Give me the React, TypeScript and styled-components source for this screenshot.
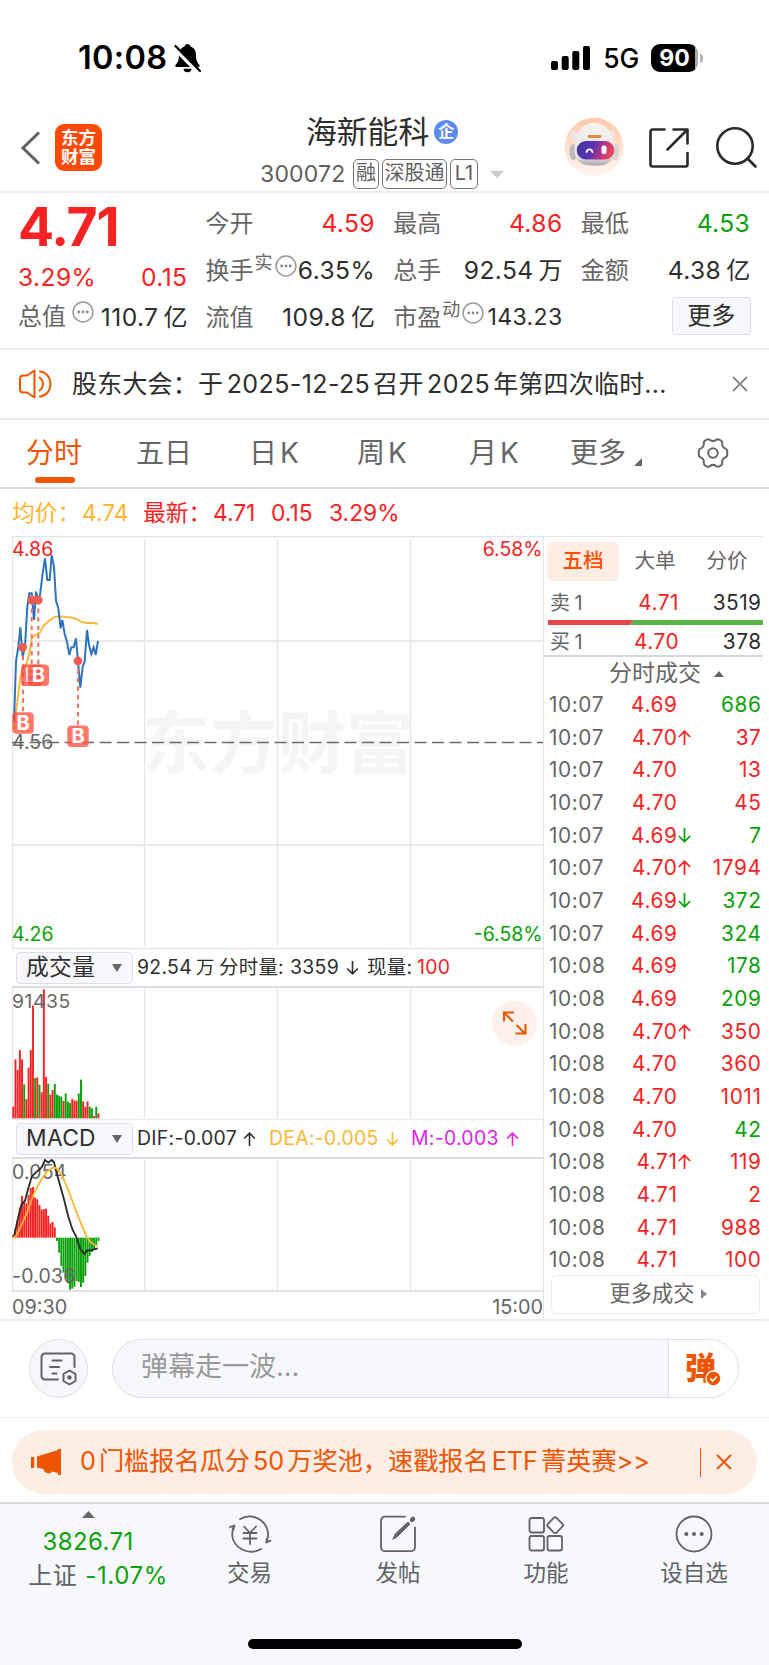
import React from 'react';
import styled, { createGlobalStyle } from 'styled-components';

const RED = '#f82222';
const GREEN = '#0aa10a';
const ORANGE = '#ee5500';
const INK = '#2e2e2e';
const GREY = '#666666';
const LINE = '#e2e5ea';

const Global = createGlobalStyle`
  * { box-sizing: border-box; }
  body {
    margin: 0;
    background: #fff;
    font-family: Inter, "Noto Sans CJK SC", sans-serif;
    line-height: 1;
    color: ${INK};
  }
  svg { display: block; flex: none; overflow: visible; }
  button { font: inherit; color: inherit; padding: 0; }
`;

const Screen = styled.div`
  width: 769px;
  height: 1665px;
  display: flex;
  flex-direction: column;
  overflow: hidden;
  white-space: nowrap;
`;

/* ---------- status bar ---------- */

const StatusBar = styled.div`
  height: 104px;
  padding: 12px 66px 0 78px;
  display: flex;
  align-items: center;
  color: #000;
`;
const Clock = styled.div`
  width: 96px;
  font-size: 32.5px;
  font-weight: 600;
  letter-spacing: 0.3px;
`;
const Network = styled.div`
  margin: 0 12px 0 13px;
  font-size: 26.5px;
  font-weight: 500;
  letter-spacing: -0.2px;
`;
const Battery = styled.div`
  width: 47px;
  height: 28px;
  border-radius: 9px;
  background: linear-gradient(90deg, #000 93%, #aaa 93%);
  color: #fff;
  font-size: 23px;
  font-weight: 700;
  text-align: center;
  line-height: 28px;
`;
const BatteryCap = styled.div`
  width: 3px;
  height: 9px;
  margin-left: 2px;
  border-radius: 0 4px 4px 0;
  background: #b5b5b5;
`;
const Spacer = styled.div`flex: 1;`;

/* ---------- title bar ---------- */

const TitleBar = styled.header`
  height: 89px;
  padding: 0 12px 0 20px;
  display: grid;
  grid-template-columns: 35px 47px 1fr 85px 67px 41px;
  border-bottom: 2px solid #ececec;
`;
const IconCell = styled.div<{ $top: number; $left?: number }>`
  padding: ${p => p.$top}px 0 0 ${p => p.$left ?? 0}px;
`;
const Logo = styled.div`
  width: 47px;
  height: 47px;
  margin-top: 20px;
  border-radius: 9px;
  background: #ff4a07;
  color: #fff;
  font-size: 17.5px;
  font-weight: 700;
  line-height: 19px;
  padding-top: 4px;
  text-align: center;
`;
const TitleBlock = styled.div`
  padding-left: 158px;
`;
const StockName = styled.div`
  height: 55px;
  padding: 1px 0 0 46px;
  display: flex;
  align-items: center;
  font-size: 30.8px;
`;
const CompanyBadge = styled.span`
  width: 24px;
  height: 24px;
  margin-left: 5px;
  border-radius: 50%;
  background: #5c8bee;
  color: #fff;
  font-size: 16px;
  font-weight: 700;
  line-height: 23px;
  text-align: center;
`;
const CodeRow = styled.div`
  display: flex;
  align-items: center;
  color: #606060;
`;
const Code = styled.span`
  width: 93px;
  font-size: 23px;
  letter-spacing: 0.2px;
`;
const Tag = styled.span<{ $w: number }>`
  width: ${p => p.$w}px;
  height: 30px;
  margin-right: 3px;
  border: 1.5px solid #777;
  border-radius: 5px;
  font-size: 20px;
  line-height: 26px;
  text-align: center;
`;

/* ---------- quote summary ---------- */

const Quote = styled.section`
  height: 157px;
  padding: 7px 0 0 18px;
  display: grid;
  grid-template-columns: repeat(4, 169px);
  column-gap: 18.6px;
  border-bottom: 2px solid #ececec;
`;
const QuoteColumn = styled.div``;
const BigPrice = styled.div`
  height: 54px;
  font-size: 53.5px;
  font-weight: 700;
  line-height: 54px;
  letter-spacing: -1.2px;
  color: ${RED};
`;
const QuoteRow = styled.div<{ $h?: number }>`
  height: ${p => p.$h ?? 47}px;
  display: flex;
  align-items: center;
  justify-content: space-between;
`;
const QuoteLabel = styled.span`
  display: flex;
  align-items: center;
  font-size: 24px;
  color: ${GREY};
`;
const SmallMark = styled.sup`
  font-size: 18px;
  line-height: 18px;
  margin: -16px 0 0 1px;
`;
const InfoDot = styled.span<{ $gap?: number }>`
  margin: -10px 0 0 ${p => p.$gap ?? 2}px;
`;
const QuoteValue = styled.span<{ $c?: string; $s?: number }>`
  font-size: ${p => p.$s ?? 24.6}px;
  letter-spacing: 0.4px;
  margin-right: -0.4px;
  color: ${p => p.$c ?? INK};
`;
const Unit = styled.span`
  margin-left: 5px;
  font-size: 24px;
  letter-spacing: 0;
`;
const MoreButton = styled.button`
  width: 79px;
  height: 38px;
  margin: 3px -1px 0 auto;
  display: block;
  border: 1.5px solid #dcdfe6;
  border-radius: 4px;
  background: #f7f8fb;
  font-size: 24px;
`;

/* ---------- notice ---------- */

const Notice = styled.div`
  height: 70px;
  padding: 0 21px 0 18px;
  display: flex;
  align-items: center;
  border-bottom: 2px solid #e9e9ec;
`;
const NoticeText = styled.div`
  margin-left: 18px;
  flex: 1;
  font-size: 25px;
  letter-spacing: 0.2px;
`;
const Digits = styled.span`
  margin: 0 3px 0 3.5px;
  letter-spacing: 0.4px;
`;

/* ---------- period tabs ---------- */

const Tabs = styled.nav`
  height: 69px;
  padding-left: 26px;
  display: grid;
  grid-template-columns: 110px 113px 108px 112px 101px 127px 40px;
  align-items: center;
  border-bottom: 2px solid #d9dce2;
`;
const Tab = styled.div<{ $on?: boolean }>`
  height: 67px;
  display: flex;
  flex-direction: column;
  align-items: flex-start;
  justify-content: flex-end;
  font-size: 28px;
  color: ${p => (p.$on ? ORANGE : GREY)};
`;
const TabLabel = styled.span<{ $gap?: number }>`
  height: 33px;
  line-height: 28px;
  display: flex;
  gap: ${p => p.$gap ?? 3}px;
`;
const Underline = styled.i<{ $on?: boolean }>`
  width: 40px;
  height: 6px;
  margin: 5px 0 4px 9px;
  border-radius: 3px;
  background: ${p => (p.$on ? ORANGE : 'transparent')};
`;

const PriceLine = styled.div`
  height: 47px;
  padding: 1px 0 0 12px;
  display: flex;
  align-items: center;
  font-size: 22.8px;
  color: ${RED};
`;
const PriceItem = styled.span<{ $w: number; $c?: string }>`
  width: ${p => p.$w}px;
  color: ${p => p.$c ?? RED};
`;

/* ---------- charts + order book ---------- */

const Market = styled.section`
  height: 785px;
  display: grid;
  grid-template-columns: 544px 225px;
  border-bottom: 2px solid #ececec;
`;
const ChartColumn = styled.div`
  border-right: 1.5px solid ${LINE};
`;
const IndicatorBar = styled.div`
  height: 39px;
  margin-left: 12px;
  padding-left: 4px;
  display: flex;
  align-items: center;
  font-size: 19.4px;
  letter-spacing: 0.3px;
  border-bottom: 2px solid #dadde3;
`;
const Select = styled.div`
  width: 117px;
  height: 32px;
  margin-right: 4px;
  padding: 0 10px 0 9px;
  display: flex;
  align-items: center;
  justify-content: space-between;
  border: 1.5px solid #dcdfe6;
  border-radius: 4px;
  background: #f7f8fb;
  font-size: 22.8px;
`;
const IndicatorText = styled.span<{ $w: number; $c?: string }>`
  width: ${p => p.$w}px;
  color: ${p => p.$c ?? INK};
`;
const SmallUnit = styled.span`
  margin-left: 4px;
  font-size: 18.5px;
`;
const TimeAxis = styled.div`
  height: 28px;
  margin-left: 12px;
  padding: 4px 0 0;
  display: flex;
  align-items: center;
  justify-content: space-between;
  font-size: 19.8px;
  color: ${GREY};
`;
const Book = styled.div`
  border-top: 1.5px solid ${LINE};
  margin-right: 6px;
`;
const BookTabs = styled.div`
  height: 45px;
  padding: 5px 0 0 3px;
  display: grid;
  grid-template-columns: 72px 72px 72px;
`;
const BookTab = styled.div<{ $on?: boolean }>`
  height: 39px;
  border-radius: 6px;
  background: ${p => (p.$on ? '#ffede5' : 'transparent')};
  color: ${p => (p.$on ? '#ff5000' : GREY)};
  font-size: 20.6px;
  font-weight: ${p => (p.$on ? 500 : 400)};
  line-height: 38px;
  text-align: center;
`;
const LevelRow = styled.div<{ $h: number }>`
  height: ${p => p.$h}px;
  padding: 4px 1.5px 0 6px;
  display: grid;
  grid-template-columns: 60px 69px 1fr;
  align-items: center;
  font-size: 20.8px;
  letter-spacing: 0.5px;
`;
const Level = styled.span`
  color: ${GREY};
  font-size: 20px;
  display: flex;
  gap: 4px;
`;
const Right = styled.span<{ $c?: string }>`
  text-align: right;
  color: ${p => p.$c ?? INK};
`;
const BookTitle = styled.div`
  height: 34px;
  padding: 1px 0 0 65px;
  display: flex;
  align-items: center;
  gap: 13px;
  border-top: 2px solid #d3d7de;
  color: ${GREY};
  font-size: 23px;
`;
const TradeRow = styled.div`
  height: 32.68px;
  padding: 0 1.5px 0 5px;
  display: grid;
  grid-template-columns: 60px 68.5px 13.5px 1fr;
  align-items: center;
  font-size: 20.8px;
  letter-spacing: 0.6px;
  color: ${GREY};
`;
const ArrowCell = styled.span`
  margin-top: -2px;
`;
const MoreTrades = styled.div`
  width: 209px;
  height: 39px;
  margin: -2px 0 0 7px;
  padding: 0 0 1px 6px;
  display: flex;
  align-items: center;
  justify-content: center;
  gap: 7px;
  border: 1.5px solid #ececee;
  border-radius: 6px;
  color: ${GREY};
  font-size: 21.2px;
`;

/* ---------- comment bar ---------- */

const CommentBar = styled.div`
  height: 97px;
  padding: 18px 30px 0 29px;
  display: flex;
  gap: 24px;
  border-bottom: 1.5px solid #f0f0f2;
`;
const RoundButton = styled.div`
  width: 59px;
  height: 59px;
  border: 1.5px solid #dcdfe5;
  border-radius: 50%;
  background: #f6f7fa;
  display: grid;
  place-items: center;
`;
const CommentField = styled.div`
  flex: 1;
  height: 59px;
  display: flex;
  border: 1.5px solid #dcdfe5;
  border-radius: 30px;
  overflow: hidden;
  background: #f6f7fa;
`;
const Placeholder = styled.div`
  flex: 1;
  padding: 13px 0 0 28px;
  color: #999;
  font-size: 27px;
`;
const SendCell = styled.div`
  width: 70px;
  border-left: 1.5px solid #dcdfe5;
  background: #fff;
  padding: 12px 0 0 16px;
  color: ${ORANGE};
  font-size: 31px;
  font-weight: 900;
  display: flex;
`;
const SendBadge = styled.span`
  margin: 19px 0 0 -10px;
`;

/* ---------- promo banner ---------- */

const BannerWrap = styled.div`
  height: 86px;
  padding: 12px 12px 0;
  border-bottom: 2px solid #d9dce0;
`;
const Banner = styled.div`
  height: 64px;
  padding: 0 25px 0 19px;
  border-radius: 32px;
  background: #feede5;
  color: ${ORANGE};
  display: flex;
  align-items: center;
`;
const BannerText = styled.div`
  flex: 1;
  padding-left: 18px;
  font-size: 25.2px;
`;
const BannerDigits = styled.span<{ $first?: boolean }>`
  margin: 0 3px 0 ${p => (p.$first ? 0 : 3)}px;
`;
const BannerRule = styled.i`
  width: 1.5px;
  height: 29px;
  margin-right: 15px;
  background: ${ORANGE};
`;

/* ---------- bottom navigation ---------- */

const Bottom = styled.footer`
  flex: 1;
  background: #f7f8fb;
  display: flex;
  flex-direction: column;
  align-items: center;
`;
const NavGrid = styled.div`
  width: 100%;
  height: 135px;
  padding-left: 12px;
  display: grid;
  grid-template-columns: 163px 149px 148px 148px 148px;
`;
const NavItem = styled.div`
  padding-top: 11px;
  display: flex;
  flex-direction: column;
  align-items: center;
  gap: 9px;
  font-size: 22.5px;
  color: #606266;
`;
const IndexItem = styled.div`
  width: 152px;
  padding-top: 7px;
  font-size: 24px;
  letter-spacing: 0.4px;
  color: ${GREEN};
  display: flex;
  flex-direction: column;
  align-items: center;
`;
const IndexValue = styled.div`
  margin-top: 12px;
`;
const IndexChange = styled.div`
  margin: 10px 0 0 20px;
  letter-spacing: 0.6px;
`;
const IndexName = styled.span`
  color: #606266;
  margin-right: 8px;
`;
const HomeIndicator = styled.div`
  width: 274px;
  height: 10px;
  border-radius: 5px;
  background: #000;
`;

/* ---------- icons ---------- */

const MutedBell = () => (
  <svg width="27" height="30" viewBox="0 0 27 30">
    <path d="M13.5 1c-1.7 0-2.8 1.1-2.9 2.5C7 4.700 5 7.800 5 11.500c0 6-1.200 8-3.300 10.200-.8.9-.4 2.300 1 2.300h21.600c1.400 0 1.800-1.400 1-2.300C23.200 19.500 22 17.500 22 11.500c0-3.700-2-6.800-5.600-8C16.300 2.100 15.200 1 13.500 1z" />
    <path d="M9.500 25.800h8a4 3.400 0 0 1-8 0z" />
    <path d="M0 4 24.500 29" stroke="#fff" strokeWidth="5" />
    <path d="M1.500 3 26 28" stroke="#000" strokeWidth="2.200" strokeLinecap="round" />
  </svg>
);
const Signal = () => (
  <svg width="39" height="24" viewBox="0 0 39 24">
    <rect x="0" y="15" width="7" height="9" rx="2" />
    <rect x="10.700" y="10" width="7" height="14" rx="2" />
    <rect x="21.300" y="5" width="7" height="19" rx="2" />
    <rect x="32" y="0" width="7" height="24" rx="2" />
  </svg>
);
const Back = () => (
  <svg width="21" height="34" viewBox="0 0 21 34" fill="none" stroke="#606060" strokeWidth="3">
    <path d="M19 1.500 3 17l16 15.500" />
  </svg>
);
const Robot = () => (
  <svg width="60" height="60" viewBox="0 0 60 60">
    <defs>
      <linearGradient id="halo" x1="0" y1="0" x2="0" y2="1">
        <stop offset="0" stopColor="#ffc8ac" />
        <stop offset="1" stopColor="#fff6f2" />
      </linearGradient>
      <linearGradient id="visor" x1="0" y1="0" x2="1" y2="0.200">
        <stop offset="0" stopColor="#3c3c98" />
        <stop offset="0.450" stopColor="#5a30b8" />
        <stop offset="0.750" stopColor="#b0368a" />
        <stop offset="1" stopColor="#e6485a" />
      </linearGradient>
      <linearGradient id="shell" x1="0" y1="0" x2="0" y2="1">
        <stop offset="0" stopColor="#f6f3f3" />
        <stop offset="0.800" stopColor="#e6e2e4" />
        <stop offset="1" stopColor="#a9a4ab" />
      </linearGradient>
    </defs>
    <circle cx="30" cy="30" r="29.300" fill="url(#halo)" />
    <path d="M7 12c-1.500 5 0 9 5 12l6-9c-5 1-9 0-11-3zM49 12c2.500 5 1 9-3 12l-6-9c4 1 7 0 9-3z" fill="#ece7e7" />
    <ellipse cx="9.500" cy="35" rx="4" ry="8" fill="#bdb8be" />
    <ellipse cx="51" cy="35" rx="4" ry="8" fill="#d6d2d6" />
    <path d="M30 6C18 6 11 16 10.500 31c-.3 9 3 14.500 9.500 16.500 6 1.600 15 1.600 21 0 6.500-2 9.800-7.500 9.500-16.500C50 16 42 6 30 6z" fill="url(#shell)" />
    <path d="M25 19.500h11" stroke="#e0893f" strokeWidth="2.800" strokeLinecap="round" />
    <rect x="12.800" y="24" width="37.500" height="18.500" rx="9" fill="url(#visor)" />
    <path d="M22.500 35c1-3.500 5-3.500 6 0" fill="none" stroke="#fff" strokeWidth="1.800" strokeLinecap="round" />
    <rect x="37.500" y="28.500" width="5" height="8.500" rx="2" fill="#fff" />
  </svg>
);
const Share = () => (
  <svg width="40" height="40" viewBox="0 0 40 40" fill="none" stroke="#2b2b2b" strokeWidth="2.600" strokeLinecap="round" strokeLinejoin="round">
    <path d="M15.500 1.500H3.500a2 2 0 0 0-2 2v33a2 2 0 0 0 2 2h33a2 2 0 0 0 2-2V25" />
    <path d="M24.500 1.500h14v14M38 2 18.500 21.500" />
  </svg>
);
const Search = () => (
  <svg width="42" height="42" viewBox="0 0 42 42" fill="none" stroke="#2b2b2b" strokeWidth="2.600" strokeLinecap="round">
    <circle cx="19" cy="19" r="17.700" />
    <path d="m31.500 31.500 8 8" />
  </svg>
);
const Dots = () => (
  <svg width="22" height="22" viewBox="0 0 22 22">
    <circle cx="11" cy="11" r="9.900" fill="none" stroke="#999" strokeWidth="1.500" />
    <circle cx="6.700" cy="11" r="1.400" fill="#888" />
    <circle cx="11" cy="11" r="1.400" fill="#888" />
    <circle cx="15.300" cy="11" r="1.400" fill="#888" />
  </svg>
);
const Speaker = () => (
  <svg width="36" height="30" viewBox="0 0 36 30" fill="none" stroke={ORANGE} strokeWidth="2" strokeLinejoin="round" strokeLinecap="round">
    <path d="M2 10c0-2 1-3.500 3-3.500h4L16.500 1.500v27L9 23.500H5c-2 0-3-1.500-3-3.500z" />
    <path d="M21.500 8.500c4.500 2.500 4.500 10.500 0 13M22 2.500c14 2 14 23 0 25" />
  </svg>
);
const Cross = ({ size, color, w }: { size: number; color: string; w: number }) => (
  <svg width={size} height={size} viewBox="0 0 16 16" stroke={color} strokeWidth={w}>
    <path d="m1 1 14 14M15 1 1 15" />
  </svg>
);
const Gear = () => (
  <svg width="32" height="32" viewBox="0 1 32 30" fill="none" stroke={GREY} strokeWidth="2" strokeLinejoin="round">
    <path d="M10 1.500c1.200-.6 2-.4 2.900.4 2 1.600 4.200 1.600 6.200 0 .9-.8 1.700-1 2.900-.4l2 1.200c1 .6 1.300 1.400 1.200 2.500-.3 2.600.8 4.400 3.200 5.400 1.200.5 1.800 1.100 1.800 2.300v4.200c0 1.200-.6 1.800-1.800 2.300-2.400 1-3.500 2.800-3.200 5.400.1 1.100-.2 1.900-1.200 2.500l-2 1.200c-1.200.6-2 .4-2.900-.4-2-1.600-4.200-1.600-6.200 0-.9.800-1.700 1-2.900.4l-2-1.200c-1-.6-1.300-1.400-1.200-2.500.3-2.600-.8-4.400-3.200-5.400C2.400 18.900 1.800 18.300 1.800 17.100v-4.200c0-1.200.6-1.800 1.800-2.300 2.400-1 3.500-2.800 3.200-5.400-.1-1.100.2-1.900 1.200-2.500z" />
    <circle cx="16" cy="15" r="4.800" />
  </svg>
);
const Tri = ({ d, w, h, c = GREY }: { d: string; w: number; h: number; c?: string }) => (
  <svg width={w} height={h} viewBox="0 0 10 10" preserveAspectRatio="none" fill={c}>
    <path d={d} />
  </svg>
);
const DOWN = 'M0 0h10L5 10z';
const UP = 'M0 10h10L5 0z';
const RIGHT = 'M0 0v10l10-5z';

/* ---------- chart data, three units per pixel ---------- */

const pricePts =
  '42,575 48,395 55,350 61,292 68,380 75,350 82,230 88,190 95,190 102,270 108,185 115,210 120,195 128,130 135,85 142,150 149,150 155,75 162,110 168,212 175,235 182,295 187,270 194,312 201,335 208,375 214,352 221,352 228,325 234,395 241,473 248,410 254,395 261,300 267,345 274,372 281,352 287,375 294,333';
const avgPts =
  '42,600 48,545 55,490 61,440 68,420 80,400 88,370 95,325 105,315 120,307 130,288 150,270 165,260 185,259 215,263 232,268 243,275 260,279 280,279 293,282';
const volumes =
  '530r 388r 420r 360r 388r 463g 508r 413r 360r 227r 444g 442r 464g 487r 178r 441r 461g 494r 480r 462g 494g 497g 500g 513r 490g 515g 519g 506r 512r 512r 491g 449g 514r 530r 514r 530g 535g 558r 530g 550r'.split(' ');
const macd = [
  915, 895, 870, 833, 798, 815, 820, 795, 774, 771, 803, 808, 825, 838, 838, 836, 857, 880, 876, 892, 933, 968,
  1008, 1028, 1045, 1060, 1079, 1076, 1070, 1053, 1056, 1071, 1058, 1038, 998, 978, 966, 956, 945, 933,
];
const difPts =
  '42,920 55,860 65,822 75,812 85,775 95,740 110,725 125,712 135,690 145,698 155,690 162,697 170,730 190,800 205,860 218,900 228,918 240,955 247,965 254,972 260,962 275,960 293,955';
const deaPts =
  '40,924 50,915 62,890 80,850 100,795 120,755 140,725 160,712 170,715 185,735 205,780 225,835 245,885 260,920 270,935 280,942 293,948';

const dots = [[22.7, 111.3], [31.700, 64], [38.300, 64], [78, 125]];
const badges = [[23, 187], [31.700, 139.300], [38.300, 139.300], [78, 200.300]];

const Grid = ({ top, bottom }: { top: number; bottom: number }) => (
  <path d={`M144.500 ${top}V${bottom}M277.500 ${top}V${bottom}M410.500 ${top}V${bottom}`} stroke={LINE} strokeWidth="1.300" />
);

const PriceChart = () => (
  <svg width="543" height="413" viewBox="0 0 543 413" fontSize="19.500">
    <text x="142" y="232" fontSize="68" fontWeight="700" fill="#f5f5f5">东方财富</text>
    <path d="M12.500 413V.7H543" fill="none" stroke={LINE} strokeWidth="1.300" />
    <Grid top={3} bottom={410} />
    <path d="M12 105H543M12 309H543" stroke="#e5e9f0" strokeWidth="1.800" />
    <path d="M12 412.500H543" stroke={LINE} strokeWidth="1.300" />
    <path d="M12 206.500H543" stroke="#6b6b6b" strokeWidth="1.400" strokeDasharray="12 5.500" />
    <text x="12" y="20" fill={RED}>4.86</text>
    <text x="542.500" y="20" fill={RED} textAnchor="end">6.58%</text>
    <text x="12" y="213" fill={GREY}>4.56</text>
    <text x="12" y="405" fill={GREEN}>4.26</text>
    <text x="542.500" y="405" fill={GREEN} textAnchor="end">-6.58%</text>
    <g transform="translate(0 -6) scale(.33333)" fill="none">
      <polyline points={avgPts} stroke="#fcb630" strokeWidth="5.500" />
      <polyline points={pricePts} stroke="#2e73bd" strokeWidth="6" />
    </g>
    {dots.map(([x, y], i) => (
      <g key={i}>
        <path d={`M${badges[i][0]} ${y}V${badges[i][1] - 10}`} stroke="#fb6f5f" strokeWidth="2" strokeDasharray="4.500 4" />
        <circle cx={x} cy={y} r="4.400" fill="#f25b50" />
      </g>
    ))}
    {badges.map(([x, y], i) => (
      <g key={i}>
        <rect x={x - 10.700} y={y - 10.700} width="21.400" height="21.400" rx="4" fill="#ff4a36" fillOpacity=".75" />
        <text x={x} y={y + 7} fill="#fff" fontSize="20" fontWeight="700" textAnchor="middle">B</text>
      </g>
    ))}
  </svg>
);

const VolumeChart = () => (
  <svg width="543" height="132" viewBox="0 0 543 132" fontSize="19.300">
    <path d="M12.500 0V131" stroke={LINE} strokeWidth="1.300" />
    <Grid top={1} bottom={130} />
    <path d="M12 131.500H543" stroke="#ececef" strokeWidth="1.600" />
    <g transform="translate(0 -58) scale(.33333)">
      {volumes.map((v, i) => {
        const y = parseInt(v, 10);
        return <rect key={i} x={37 + i * 6.550} y={y} width="5.800" height={565 - y} fill={v.endsWith('r') ? RED : GREEN} />;
      })}
    </g>
    <text x="12" y="20" fill={GREY} letterSpacing=".6">91435</text>
    <circle cx="514.500" cy="35" r="22.500" fill="#fef1eb" />
    <g fill="none" stroke={ORANGE} strokeWidth="2">
      <path d="M504 33.500v-9h10M504.500 25l8.500 8.500M525.500 36v9.500h-10M525 45.500l-8.500-8.500" />
    </g>
  </svg>
);

const MacdChart = () => (
  <svg width="543" height="133" viewBox="0 0 543 133" fontSize="19.500">
    <path d="M12.500 0V132" stroke={LINE} strokeWidth="1.300" />
    <Grid top={1} bottom={131} />
    <path d="M12 132H543" stroke="#d6d9df" strokeWidth="1.600" />
    <g transform="translate(0 -229) scale(.33333)">
      {macd.map((y, i) => (
        <rect key={i} x={37 + i * 6.550} y={Math.min(y, 923)} width="5.800" height={Math.abs(923 - y)} fill={i < 20 ? RED : GREEN} />
      ))}
    </g>
    <text x="12" y="20" fill={GREY} letterSpacing=".2">0.054</text>
    <text x="12" y="124" fill={GREY} letterSpacing=".2">-0.036</text>
    <g transform="translate(0 -229) scale(.33333)" fill="none" strokeWidth="5.500">
      <polyline points={difPts} stroke="#2b2b2b" />
      <polyline points={deaPts} stroke="#fcb630" />
    </g>
  </svg>
);

const trades: [string, string, string, string, boolean][] = [
  ['10:07', '4.69', '', '686', false],
  ['10:07', '4.70', '↑', '37', true],
  ['10:07', '4.70', '', '13', true],
  ['10:07', '4.70', '', '45', true],
  ['10:07', '4.69', '↓', '7', false],
  ['10:07', '4.70', '↑', '1794', true],
  ['10:07', '4.69', '↓', '372', false],
  ['10:07', '4.69', '', '324', false],
  ['10:08', '4.69', '', '178', false],
  ['10:08', '4.69', '', '209', false],
  ['10:08', '4.70', '↑', '350', true],
  ['10:08', '4.70', '', '360', true],
  ['10:08', '4.70', '', '1011', true],
  ['10:08', '4.70', '', '42', false],
  ['10:08', '4.71', '↑', '119', true],
  ['10:08', '4.71', '', '2', true],
  ['10:08', '4.71', '', '988', true],
  ['10:08', '4.71', '', '100', true],
];

const Arrow = ({ up, c, h = 14, w = 13 }: { up: boolean; c: string; h?: number; w?: number }) => (
  <svg width={w} height={h} viewBox="0 0 13 15" fill="none" stroke={c} strokeWidth="1.700" strokeLinejoin="miter">
    <path d={up ? 'M6.500 15V1.500M.8 7l5.700-5.700L12.200 7' : 'M6.500 0v13.500M.8 8l5.700 5.700L12.200 8'} />
  </svg>
);

const navStroke = { fill: 'none', stroke: '#606266', strokeWidth: 1.8, strokeLinecap: 'round', strokeLinejoin: 'round' } as const;

const TradeIcon = () => (
  <svg width="44" height="38" viewBox="0 0 44 38" {...navStroke}>
    <path d="M12 4C22-2 35 3 39 13.500c1.800 4.700 1.500 9.300-.8 14l4.300-1.800M38.200 27.500l.8-4" />
    <path d="M33 34C23 40 10 35.500 5.500 25.500 3.500 20.500 3.800 15.500 6.300 10.500L2 12.200M6.300 10.500l-.8 4" />
    <path d="m16 11.500 6 6.500 6-6.500M15.500 18h13M15.500 23.500h13M22 18v11" />
  </svg>
);
const PostIcon = () => (
  <svg width="36" height="38" viewBox="0 0 36 38" {...navStroke}>
    <path d="M25 1.700H5a4 4 0 0 0-4 4v26.500a4 4 0 0 0 4 4h26a4 4 0 0 0 4-4V12.500" />
    <path d="m13 24 2.200-5L28 7l2 2-12.500 12.500z" fill="#606266" strokeWidth="1" />
    <path d="m33 4-1 1" strokeWidth="4.500" />
  </svg>
);
const AppsIcon = () => (
  <svg width="36" height="38" viewBox="0 0 36 38" {...navStroke}>
    <rect x="1.500" y="3" width="14.500" height="14.500" rx="2" />
    <rect x="1.500" y="21" width="14.500" height="14.500" rx="2" />
    <rect x="19.500" y="21" width="14.500" height="14.500" rx="2" />
    <path d="M25.800 2.800a1.900 1.900 0 0 1 2.700 0l5.900 6.100a1.900 1.900 0 0 1 0 2.600l-5.900 6.100a1.900 1.900 0 0 1-2.700 0l-5.900-6.100a1.900 1.900 0 0 1 0-2.600z" />
  </svg>
);
const MoreIcon = () => (
  <svg width="38" height="38" viewBox="0 0 38 38" {...navStroke}>
    <circle cx="19" cy="19" r="17.500" />
    <g fill="#606266" stroke="none">
      <circle cx="11.300" cy="19" r="2" />
      <circle cx="19" cy="19" r="2" />
      <circle cx="26.700" cy="19" r="2" />
    </g>
  </svg>
);
const CommentIcon = () => (
  <svg width="37" height="34" viewBox="0 0 37 34" {...navStroke} strokeWidth={2}>
    <path d="M18 27.500H5a3.500 3.500 0 0 1-3.500-3.500V5A3.500 3.500 0 0 1 5 1.500h26A3.500 3.500 0 0 1 34.500 5v10" />
    <path d="M12.500 8.500h9M10 15h9M12.500 21.500h4" />
    <path d="m29.500 18.500 6 3.500v7l-6 3.500-6-3.500v-7z" />
    <circle cx="29.500" cy="25.500" r="1.200" fill="#606266" />
  </svg>
);
const Megaphone = () => (
  <svg width="31" height="26" viewBox="0 0 31 26" fill={ORANGE}>
    <rect x="0" y="8" width="3.200" height="11" />
    <path d="M6 7.500 27 1V0h3v26h-3v-2l-6-1.500c-1 2-3 2-5 1.500s-3-1.500-3.500-4L6 18.500z" />
  </svg>
);

export default function App() {
  return (
    <Screen>
      <Global />
      <StatusBar>
        <Clock>10:08</Clock>
        <MutedBell />
        <Spacer />
        <Signal />
        <Network>5G</Network>
        <Battery>90</Battery>
        <BatteryCap />
      </StatusBar>

      <TitleBar>
        <IconCell $top={27}><Back /></IconCell>
        <Logo>东方<br />财富</Logo>
        <TitleBlock>
          <StockName>海新能科<CompanyBadge>企</CompanyBadge></StockName>
          <CodeRow>
            <Code>300072</Code>
            <Tag $w={26}>融</Tag>
            <Tag $w={65}>深股通</Tag>
            <Tag $w={28}>L1</Tag>
            <IconCell $top={0} $left={9}><Tri d={DOWN} w={14} h={7} c="#c9c9c9" /></IconCell>
          </CodeRow>
        </TitleBlock>
        <IconCell $top={13}><Robot /></IconCell>
        <IconCell $top={24}><Share /></IconCell>
        <IconCell $top={23}><Search /></IconCell>
      </TitleBar>

      <Quote>
        <QuoteColumn>
          <BigPrice>4.71</BigPrice>
          <QuoteRow $h={46}>
            <QuoteValue $c={RED}>3.29%</QuoteValue>
            <QuoteValue $c={RED}>0.15</QuoteValue>
          </QuoteRow>
          <QuoteRow $h={34}>
            <QuoteLabel>总值<InfoDot $gap={6}><Dots /></InfoDot></QuoteLabel>
            <QuoteValue>110.7<Unit>亿</Unit></QuoteValue>
          </QuoteRow>
        </QuoteColumn>
        <QuoteColumn>
          <QuoteRow>
            <QuoteLabel>今开</QuoteLabel>
            <QuoteValue $c={RED}>4.59</QuoteValue>
          </QuoteRow>
          <QuoteRow>
            <QuoteLabel>换手<SmallMark>实</SmallMark><InfoDot><Dots /></InfoDot></QuoteLabel>
            <QuoteValue>6.35%</QuoteValue>
          </QuoteRow>
          <QuoteRow>
            <QuoteLabel>流值</QuoteLabel>
            <QuoteValue>109.8<Unit>亿</Unit></QuoteValue>
          </QuoteRow>
        </QuoteColumn>
        <QuoteColumn>
          <QuoteRow>
            <QuoteLabel>最高</QuoteLabel>
            <QuoteValue $c={RED}>4.86</QuoteValue>
          </QuoteRow>
          <QuoteRow>
            <QuoteLabel>总手</QuoteLabel>
            <QuoteValue>92.54<Unit>万</Unit></QuoteValue>
          </QuoteRow>
          <QuoteRow>
            <QuoteLabel>市盈<SmallMark>动</SmallMark><InfoDot><Dots /></InfoDot></QuoteLabel>
            <QuoteValue $s={23}>143.23</QuoteValue>
          </QuoteRow>
        </QuoteColumn>
        <QuoteColumn>
          <QuoteRow>
            <QuoteLabel>最低</QuoteLabel>
            <QuoteValue $c={GREEN}>4.53</QuoteValue>
          </QuoteRow>
          <QuoteRow>
            <QuoteLabel>金额</QuoteLabel>
            <QuoteValue>4.38<Unit>亿</Unit></QuoteValue>
          </QuoteRow>
          <MoreButton>更多</MoreButton>
        </QuoteColumn>
      </Quote>

      <Notice>
        <Speaker />
        <NoticeText>
          股东大会：于<Digits>2025-12-25</Digits>召开<Digits>2025</Digits>年第四次临时...
        </NoticeText>
        <Cross size={16} color="#888" w={1.8} />
      </Notice>

      <Tabs>
        <Tab $on><TabLabel>分时</TabLabel><Underline $on /></Tab>
        <Tab><TabLabel>五日</TabLabel><Underline /></Tab>
        <Tab><TabLabel>日<span>K</span></TabLabel><Underline /></Tab>
        <Tab><TabLabel>周<span>K</span></TabLabel><Underline /></Tab>
        <Tab><TabLabel>月<span>K</span></TabLabel><Underline /></Tab>
        <Tab>
          <TabLabel $gap={8}>更多<IconCell $top={19}><Tri d="M10 0v10H0z" w={8} h={8} /></IconCell></TabLabel>
          <Underline />
        </Tab>
        <Gear />
      </Tabs>

      <PriceLine>
        <PriceItem $w={70} $c="#fcb630">均价：</PriceItem>
        <PriceItem $w={61} $c="#fcb630">4.74</PriceItem>
        <PriceItem $w={70}>最新：</PriceItem>
        <PriceItem $w={58}>4.71</PriceItem>
        <PriceItem $w={58}>0.15</PriceItem>
        <PriceItem $w={80}>3.29%</PriceItem>
      </PriceLine>

      <Market>
        <ChartColumn>
          <PriceChart />
          <IndicatorBar>
            <Select>成交量<Tri d={DOWN} w={10} h={8} /></Select>
            <IndicatorText $w={82}>92.54<SmallUnit>万</SmallUnit></IndicatorText>
            <IndicatorText $w={71}>分时量:</IndicatorText>
            <IndicatorText $w={56}>3359</IndicatorText>
            <IndicatorText $w={21}><Arrow up={false} c={INK} /></IndicatorText>
            <IndicatorText $w={50}>现量:</IndicatorText>
            <IndicatorText $w={40} $c={RED}>100</IndicatorText>
          </IndicatorBar>
          <VolumeChart />
          <IndicatorBar>
            <Select>MACD<Tri d={DOWN} w={10} h={8} /></Select>
            <IndicatorText $w={106}>DIF:-0.007</IndicatorText>
            <IndicatorText $w={26}><Arrow up c={INK} /></IndicatorText>
            <IndicatorText $w={117} $c="#fcb630">DEA:-0.005</IndicatorText>
            <IndicatorText $w={25}><Arrow up={false} c="#fcb630" /></IndicatorText>
            <IndicatorText $w={95} $c="#e01ee6">M:-0.003</IndicatorText>
            <IndicatorText $w={20}><Arrow up c="#e01ee6" /></IndicatorText>
          </IndicatorBar>
          <MacdChart />
          <TimeAxis><span>09:30</span><span>15:00</span></TimeAxis>
        </ChartColumn>
        <Book>
          <BookTabs>
            <BookTab $on>五档</BookTab>
            <BookTab>大单</BookTab>
            <BookTab>分价</BookTab>
          </BookTabs>
          <LevelRow $h={38}>
            <Level>卖<span>1</span></Level><Right $c={RED}>4.71</Right><Right>3519</Right>
          </LevelRow>
          <svg width="219" height="5" viewBox="0 0 219 5">
            <path d="M4 0h86l-4 5H4z" fill="#e8474a" />
            <path d="M90 0h129v5H86z" fill="#57b746" />
          </svg>
          <LevelRow $h={30}>
            <Level>买<span>1</span></Level><Right $c={RED}>4.70</Right><Right>378</Right>
          </LevelRow>
          <BookTitle>分时成交<Tri d={UP} w={10} h={6} /></BookTitle>
          {trades.map(([t, p, a, v, up], i) => (
            <TradeRow key={i}>
              <span>{t}</span>
              <Right $c={RED}>{p}</Right>
              <ArrowCell>{a && <Arrow up={a === '↑'} c={a === '↑' ? RED : GREEN} w={13} h={15} />}</ArrowCell>
              <Right $c={up ? RED : GREEN}>{v}</Right>
            </TradeRow>
          ))}
          <MoreTrades>更多成交<Tri d={RIGHT} w={6} h={10} c="#888" /></MoreTrades>
        </Book>
      </Market>

      <CommentBar>
        <RoundButton><CommentIcon /></RoundButton>
        <CommentField>
          <Placeholder>弹幕走一波...</Placeholder>
          <SendCell>
            弹
            <SendBadge>
              <svg width="15" height="15" viewBox="0 0 15 15">
                <circle cx="7.500" cy="7.500" r="7.500" fill={ORANGE} stroke="#fff" strokeWidth="1.400" />
                <path d="m4.200 7.500 2.500 2.500 4.200-4.500" fill="none" stroke="#fff" strokeWidth="1.600" />
              </svg>
            </SendBadge>
          </SendCell>
        </CommentField>
      </CommentBar>

      <BannerWrap>
        <Banner>
          <Megaphone />
          <BannerText>
            <BannerDigits $first>0</BannerDigits>门槛报名瓜分<BannerDigits>50</BannerDigits>万奖池，速戳报名<BannerDigits>ETF</BannerDigits>菁英赛&gt;&gt;
          </BannerText>
          <BannerRule />
          <Cross size={16} color={ORANGE} w={1.8} />
        </Banner>
      </BannerWrap>

      <Bottom>
        <NavGrid>
          <IndexItem>
            <Tri d={UP} w={13} h={7} />
            <IndexValue>3826.71</IndexValue>
            <IndexChange><IndexName>上证</IndexName>-1.07%</IndexChange>
          </IndexItem>
          <NavItem><TradeIcon />交易</NavItem>
          <NavItem><PostIcon />发帖</NavItem>
          <NavItem><AppsIcon />功能</NavItem>
          <NavItem><MoreIcon />设自选</NavItem>
        </NavGrid>
        <HomeIndicator />
      </Bottom>
    </Screen>
  );
}
